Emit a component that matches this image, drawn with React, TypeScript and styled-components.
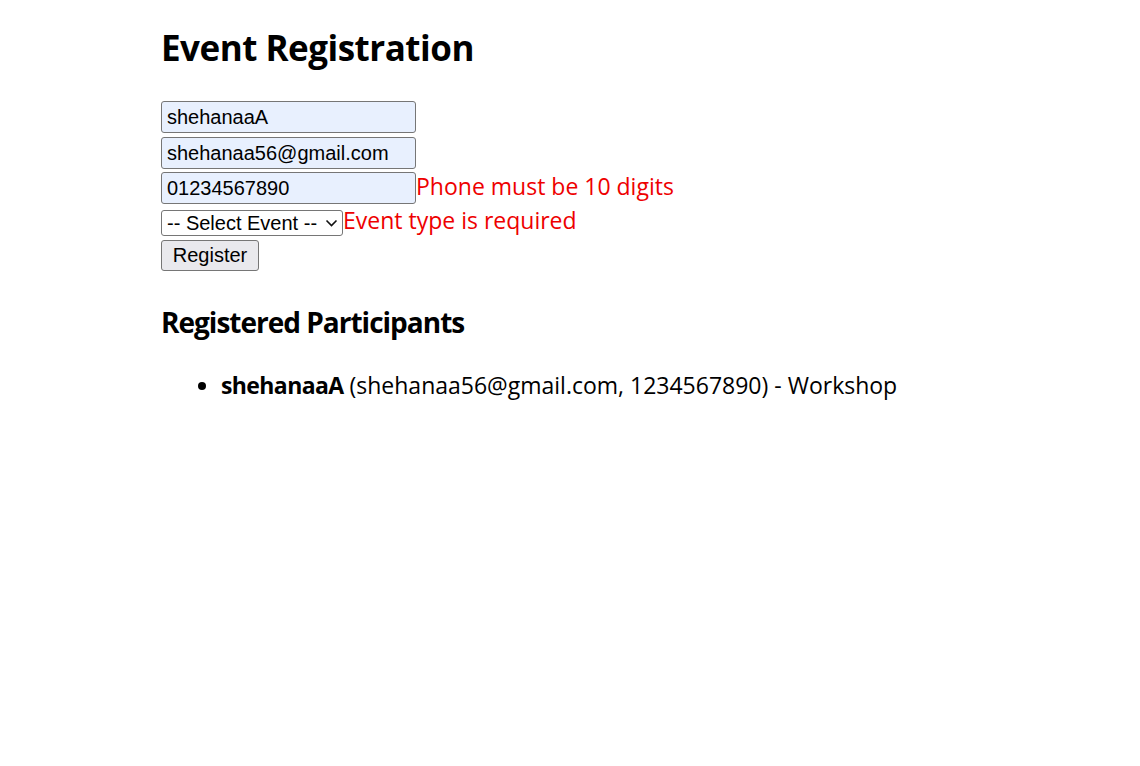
import React from "react";
import styled, { createGlobalStyle } from "styled-components";

const Global = createGlobalStyle`
  html, body { margin: 0; padding: 0; background: #fff; }
  body { font-family: "Open Sans", "Noto Sans", sans-serif; color: #000; font-size: 23px; }
`;

const Page = styled.div`
  width: 818px;
  margin: 0 auto;
  padding-top: 1px;
`;

const Title = styled.h1`
  font-size: 35px;
  font-weight: 700;
  letter-spacing: -0.5px;
  margin: 26px 0 32px;
  line-height: 1.2;
`;

const Form = styled.form`
  display: flex;
  flex-direction: column;
  align-items: flex-start;
`;

const Row = styled.div<{ $h: number; $gap: number }>`
  display: flex;
  align-items: center;
  height: ${(p) => p.$h}px;
  margin-bottom: ${(p) => p.$gap}px;
`;

const Field = styled.input`
  box-sizing: border-box;
  width: 255px;
  height: 32px;
  padding: 0 5px;
  font-family: "Liberation Sans", Arial, sans-serif;
  font-size: 20px;
  background: #e8f0fe;
  border: 1px solid #767676;
  border-radius: 3px;
  color: #000;
  outline: none;
`;

const SelectWrap = styled.span`
  position: relative;
  display: inline-flex;
`;

const Select = styled.select`
  box-sizing: border-box;
  width: 182px;
  height: 26px;
  font-family: "Liberation Sans", Arial, sans-serif;
  font-size: 20px;
  border: 1px solid #767676;
  border-radius: 3px;
  background: #fff;
  color: #000;
  padding: 0 20px 0 5px;
  appearance: none;
  -webkit-appearance: none;
  outline: none;
`;

const Chevron = styled.svg`
  position: absolute;
  right: 5px;
  top: 9px;
  width: 13px;
  height: 8px;
  pointer-events: none;
`;

const ErrorText = styled.span<{ $lift: number }>`
  color: #ee0000;
  font-size: 23px;
  line-height: 1;
  padding-bottom: ${(p) => p.$lift}px;
`;

const Button = styled.button`
  box-sizing: border-box;
  width: 98px;
  height: 31px;
  font-family: "Liberation Sans", Arial, sans-serif;
  font-size: 20px;
  background: #e9e9ed;
  border: 1px solid #767676;
  border-radius: 3px;
  color: #000;
  padding: 0;
`;

const SubTitle = styled.h2`
  font-size: 28px;
  font-weight: 700;
  letter-spacing: -1px;
  margin: 35px 0 0;
  line-height: 1.2;
`;

const List = styled.ul`
  margin: 29px 0 0;
  padding-left: 60px;
  font-size: 23px;
`;

const Item = styled.li``;

const Name = styled.strong`
  letter-spacing: -0.6px;
`;

export default function App() {
  return (
    <>
      <Global />
      <Page>
        <Title>Event Registration</Title>
        <Form onSubmit={(e) => e.preventDefault()}>
          <Row $h={32} $gap={4}>
            <Field defaultValue="shehanaaA" />
          </Row>
          <Row $h={32} $gap={3}>
            <Field defaultValue="shehanaa56@gmail.com" />
          </Row>
          <Row $h={32} $gap={6}>
            <Field defaultValue="01234567890" />
            <ErrorText $lift={4}>Phone must be 10 digits</ErrorText>
          </Row>
          <Row $h={26} $gap={4}>
            <SelectWrap>
              <Select defaultValue="">
                <option value="">-- Select Event --</option>
                <option>Workshop</option>
                <option>Seminar</option>
              </Select>
              <Chevron viewBox="0 0 13 8">
                <path d="M1.5 1.5 L6.5 6.5 L11.5 1.5" fill="none" stroke="#111" strokeWidth="1.6" />
              </Chevron>
            </SelectWrap>
            <ErrorText $lift={6}>Event type is required</ErrorText>
          </Row>
          <Button type="submit">Register</Button>
        </Form>
        <SubTitle>Registered Participants</SubTitle>
        <List>
          <Item>
            <Name>shehanaaA</Name> (shehanaa56@gmail.com, 1234567890) - Workshop
          </Item>
        </List>
      </Page>
    </>
  );
}
